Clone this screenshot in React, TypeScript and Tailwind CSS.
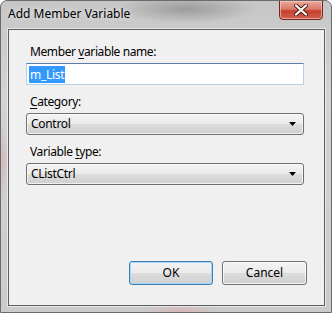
import React from "react";

const FONT = { fontFamily: '"Segoe UI", "Noto Sans", "Open Sans", sans-serif' };

function Label({ text, k }: { text: string; k: number }) {
  // k = index of the underlined access key
  return (
    <div className="h-4 pl-[4px] text-[12px] leading-4 tracking-[-0.4px] text-black">
      {text.slice(0, k)}
      <span className="underline underline-offset-2">{text[k]}</span>
      {text.slice(k + 1)}
    </div>
  );
}

function Combo({ value }: { value: string }) {
  return (
    <div className="mt-[3px] flex h-[22px] w-[278px] items-center justify-between rounded-[3px] border border-[#707070] bg-[linear-gradient(#f2f2f2_0%,#ebebeb_50%,#dddddd_50%,#cfcfcf_100%)] pl-[4px] pr-[7px] shadow-[inset_0_0_0_1px_rgba(255,255,255,0.7)]">
      <span className="text-[12px] leading-4 tracking-[-0.3px] text-black">{value}</span>
      <svg width="7" height="4" viewBox="0 0 7 4">
        <path d="M0 0h7L3.5 4z" fill="#000" />
      </svg>
    </div>
  );
}

function Button({ label, def }: { label: string; def?: boolean }) {
  return (
    <div
      className={`flex h-[24px] items-center justify-center rounded-[3px] border text-[12px] text-black ${
        def
          ? "w-[84px] border-[#3c7fb1] shadow-[inset_0_0_0_1px_#a6d8f4]"
          : "w-[85px] border-[#707070] shadow-[inset_0_0_0_1px_rgba(255,255,255,0.8)]"
      } bg-[linear-gradient(#f2f2f2_0%,#ebebeb_50%,#dddddd_50%,#cfcfcf_100%)]`}
    >
      {label}
    </div>
  );
}

export default function App() {
  return (
    <div
      className="relative h-[313px] w-[332px] overflow-hidden rounded-t-[7px] border border-[#6b6b6b] bg-[radial-gradient(ellipse_70px_14px_at_185px_8px,#9c9c9c,transparent),radial-gradient(ellipse_40px_8px_at_180px_311px,#d8b4b6,transparent),radial-gradient(ellipse_6px_40px_at_1px_160px,#d2b9ba,transparent),linear-gradient(#c6c6c6,#d3d3d3_30%,#cbcbcb)]"
      style={FONT}
    >
      <div className="flex h-[28px] items-start justify-between">
        <span className="ml-[7px] mt-[5px] text-[12px] leading-4 text-black [text-shadow:0_0_6px_rgba(255,255,255,0.9)]">
          Add Member Variable
        </span>
        <div className="mr-[8px] mt-[-1px] flex h-[20px] w-[44px] items-center justify-center rounded-b-[4px] border border-[#6d2a22] bg-[linear-gradient(#eaa89c_0%,#d97a6a_45%,#c3402d_55%,#d4604c_100%)] shadow-[inset_0_0_0_1px_rgba(255,210,200,0.6)]">
          <svg width="14" height="12" viewBox="0 0 14 12">
            <path d="M2 1.5l10 9M12 1.5l-10 9" stroke="#4a1a14" strokeWidth="4" strokeLinecap="round" />
            <path d="M2 1.5l10 9M12 1.5l-10 9" stroke="#fff" strokeWidth="2.2" strokeLinecap="round" />
          </svg>
        </div>
      </div>
      <div className="ml-[7px] flex h-[277px] w-[317px] flex-col border border-[#5e5e5e] bg-[#f0f0f0] pl-[17px] shadow-[0_0_0_1px_rgba(255,255,255,0.55)]">
        <div className="pt-[14px]">
          <Label text="Member variable name:" k={7} />
        </div>
        <div className="mt-[3px] flex h-[22px] w-[278px] items-center border border-[#b7cfe6] border-t-[#5b80a6] bg-white pl-[2px]">
          <span className="bg-[#3399ff] px-[1px] text-[12px] leading-[17px] tracking-[-0.3px] text-white">m_List</span>
        </div>
        <div className="mt-[9px]">
          <Label text="Category:" k={0} />
        </div>
        <Combo value="Control" />
        <div className="mt-[9px]">
          <Label text="Variable type:" k={9} />
        </div>
        <Combo value="CListCtrl" />
        <div className="mt-[76px] flex justify-end gap-[9px] pr-[17px]">
          <Button label="OK" def />
          <Button label="Cancel" />
        </div>
      </div>
    </div>
  );
}
